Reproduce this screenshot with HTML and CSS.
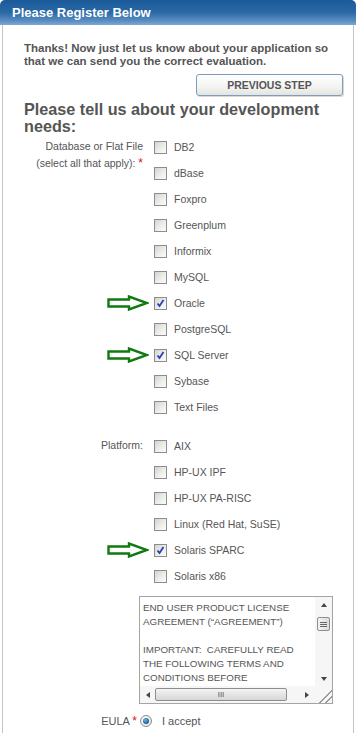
FILE: index.html
```html
<!DOCTYPE html>
<html lang="en">
<head>
    <meta charset="UTF-8">
    <meta name="viewport" content="width=device-width, initial-scale=1.0">
    <title>Please Register Below</title>
    <link rel="stylesheet" href="styles.css">
</head>
<body>
    <div class="header">Please Register Below</div>

    <div class="panel">
        <p class="intro">Thanks! Now just let us know about your application so that we can send you the correct evaluation.</p>

        <div class="btn-row">
            <button class="step-btn">PREVIOUS STEP</button>
        </div>

        <h2 class="needs">Please tell us about your development needs:</h2>

        <div class="group">
            <div class="group-label">Database or Flat File<br>(select all that apply): <span class="req">*</span></div>
            <div class="options">
                <div class="option"><span class="box"></span>DB2</div>
                <div class="option"><span class="box"></span>dBase</div>
                <div class="option"><span class="box"></span>Foxpro</div>
                <div class="option"><span class="box"></span>Greenplum</div>
                <div class="option"><span class="box"></span>Informix</div>
                <div class="option"><span class="box"></span>MySQL</div>
                <div class="option">
                    <svg class="arrow" width="42" height="16" viewBox="0 0 42 16"><polygon points="1.5,4.5 22,4.5 22,1.5 40,8 22,14.5 22,11.5 1.5,11.5"/></svg>
                    <span class="box checked"><svg width="11" height="11" viewBox="0 0 11 11"><path d="M2.5 5.5 L4.5 8 L8.5 2"/></svg></span>Oracle
                </div>
                <div class="option"><span class="box"></span>PostgreSQL</div>
                <div class="option">
                    <svg class="arrow" width="42" height="16" viewBox="0 0 42 16"><polygon points="1.5,4.5 22,4.5 22,1.5 40,8 22,14.5 22,11.5 1.5,11.5"/></svg>
                    <span class="box checked"><svg width="11" height="11" viewBox="0 0 11 11"><path d="M2.5 5.5 L4.5 8 L8.5 2"/></svg></span>SQL Server
                </div>
                <div class="option"><span class="box"></span>Sybase</div>
                <div class="option"><span class="box"></span>Text Files</div>
            </div>
        </div>

        <div class="group platform">
            <div class="group-label">Platform:</div>
            <div class="options">
                <div class="option"><span class="box"></span>AIX</div>
                <div class="option"><span class="box"></span>HP-UX IPF</div>
                <div class="option"><span class="box"></span>HP-UX PA-RISC</div>
                <div class="option"><span class="box"></span>Linux (Red Hat, SuSE)</div>
                <div class="option">
                    <svg class="arrow" width="42" height="16" viewBox="0 0 42 16"><polygon points="1.5,4.5 22,4.5 22,1.5 40,8 22,14.5 22,11.5 1.5,11.5"/></svg>
                    <span class="box checked"><svg width="11" height="11" viewBox="0 0 11 11"><path d="M2.5 5.5 L4.5 8 L8.5 2"/></svg></span>Solaris SPARC
                </div>
                <div class="option"><span class="box"></span>Solaris x86</div>
            </div>
        </div>

        <div class="eula-box">
            <div class="eula-view">
                <div class="eula-text">END USER PRODUCT LICENSE AGREEMENT (“AGREEMENT”)<br><br>IMPORTANT:&nbsp; CAREFULLY READ THE FOLLOWING TERMS AND CONDITIONS BEFORE</div>
                <div class="vscroll">
                    <span class="tri up"></span>
                    <span class="vthumb"><i></i><i></i><i></i></span>
                    <span class="tri down"></span>
                </div>
            </div>
            <div class="hscroll">
                <span class="tri left"></span>
                <span class="hthumb">III</span>
                <span class="tri right"></span>
                <span class="grip"></span>
            </div>
        </div>

        <div class="eula-row">
            <div class="eula-label">EULA <span class="req">*</span></div>
            <span class="radio"><span class="dot"></span></span>
            <span class="radio-text">I accept</span>
        </div>
    </div>
</body>
</html>
```

FILE: styles.css
```css
* {
    margin: 0;
    padding: 0;
    box-sizing: border-box;
}

body {
    font-family: 'Liberation Sans', Arial, sans-serif;
    background: #ffffff;
    color: #555555;
    width: 356px;
    height: 733px;
    overflow: hidden;
}

.header {
    height: 25px;
    padding: 4px 0 0 12px;
    background: linear-gradient(#1b5a98, #2a69a6 50%, #5d90c3 85%, #7fa8d3);
    border-radius: 5px 5px 0 0;
    color: #ffffff;
    font-size: 13px;
    font-weight: bold;
    line-height: 17px;
}

.panel {
    margin: 0 2px;
    height: 708px;
    border-left: 1px solid #c3c3c3;
    border-right: 1px solid #c3c3c3;
    padding-top: 17px;
}

.intro {
    padding-left: 21px;
    font-size: 11.5px;
    font-weight: bold;
    line-height: 13px;
    width: 330px;
}

.btn-row {
    display: flex;
    justify-content: flex-end;
    padding-right: 10px;
    margin-top: 6px;
}

.step-btn {
    width: 147px;
    height: 22px;
    border: 1px solid #7f9db9;
    border-radius: 3px;
    background: linear-gradient(#ffffff, #f3f3f1 60%, #e3e3df);
    box-shadow: 1px 1px 0 #d8d8d8;
    font-family: inherit;
    font-size: 10.5px;
    font-weight: bold;
    color: #555555;
}

.needs {
    padding-left: 21px;
    padding-right: 20px;
    margin-top: 5px;
    font-size: 16.2px;
    line-height: 17px;
    font-weight: bold;
}

.group {
    display: flex;
    margin-top: -1px;
    font-size: 10.5px;
}

.platform {
    margin-top: 13px;
}

.group-label {
    width: 140px;
    text-align: right;
    line-height: 17px;
    padding-top: 4px;
}

.req {
    color: #e01010;
    font-size: 12px;
}

.options {
    margin-left: 11px;
}

.option {
    position: relative;
    display: flex;
    align-items: center;
    height: 26px;
}

.box {
    width: 13px;
    height: 13px;
    margin-right: 7px;
    border: 1px solid #8d8d8d;
    background: linear-gradient(135deg, #d4d4cf, #efefec 60%, #fbfbfb);
    display: flex;
    align-items: center;
    justify-content: center;
}

.box path {
    fill: none;
    stroke: #2a3fb5;
    stroke-width: 1.8;
}

.arrow {
    position: absolute;
    right: calc(100% + 5px);
    top: 5px;
}

.arrow polygon {
    fill: #ffffff;
    stroke: #0e7a10;
    stroke-width: 2.4;
    stroke-linejoin: miter;
}

.eula-box {
    margin: 7px 0 0 136px;
    width: 194px;
    height: 108px;
    border: 1px solid #a5a5a5;
    display: flex;
    flex-direction: column;
}

.eula-view {
    flex: 1;
    display: flex;
    overflow: hidden;
}

.eula-text {
    flex: 1;
    padding: 4px 0 0 3px;
    font-size: 9.8px;
    line-height: 14px;
    color: #555555;
}

.vscroll {
    width: 17px;
    background: #f6f6f6;
    display: flex;
    flex-direction: column;
    align-items: center;
    padding-top: 6px;
}

.vthumb {
    margin-top: 10px;
    width: 13px;
    height: 14px;
    border: 1px solid #8e8e8e;
    border-radius: 2px;
    background: linear-gradient(90deg, #f4f4f4, #dcdcdc);
    display: flex;
    flex-direction: column;
    justify-content: center;
    align-items: center;
    gap: 1px;
}

.vthumb i {
    width: 7px;
    height: 1px;
    background: #666666;
}

.tri {
    width: 0;
    height: 0;
    border: 3px solid transparent;
}

.tri.up {
    border-bottom: 4px solid #444444;
    border-top: 0;
}

.tri.down {
    margin-top: auto;
    margin-bottom: 5px;
    border-top: 4px solid #444444;
    border-bottom: 0;
}

.tri.left {
    border-right: 4px solid #444444;
    border-left: 0;
    margin: 0 5px 0 6px;
}

.tri.right {
    border-left: 4px solid #444444;
    border-right: 0;
    margin: 0 6px 0 auto;
}

.hscroll {
    height: 17px;
    background: #f6f6f6;
    display: flex;
    align-items: center;
}

.hthumb {
    width: 132px;
    height: 13px;
    border: 1px solid #8e8e8e;
    border-radius: 2px;
    background: linear-gradient(#f4f4f4, #d6d6d6);
    font-size: 8px;
    line-height: 11px;
    text-align: center;
    color: #555555;
}

.grip {
    width: 17px;
    height: 17px;
    background: linear-gradient(135deg, transparent 60%, #999999 60%, #999999 65%, transparent 65%, transparent 78%, #999999 78%, #999999 83%, transparent 83%);
}

.eula-row {
    display: flex;
    align-items: center;
    margin-top: 10px;
    font-size: 11px;
}

.eula-label {
    width: 137px;
    text-align: right;
    padding-right: 3px;
}

.radio {
    width: 12px;
    height: 12px;
    border-radius: 50%;
    border: 1px solid #8d8d8d;
    background: radial-gradient(circle at 35% 35%, #ffffff, #dcdcd6);
    display: flex;
    align-items: center;
    justify-content: center;
    margin-right: 10px;
}

.dot {
    width: 6px;
    height: 6px;
    border-radius: 50%;
    background: radial-gradient(circle at 40% 35%, #6fb6e4, #145d96 70%);
}

.radio-text {
    font-size: 11px;
}
```
